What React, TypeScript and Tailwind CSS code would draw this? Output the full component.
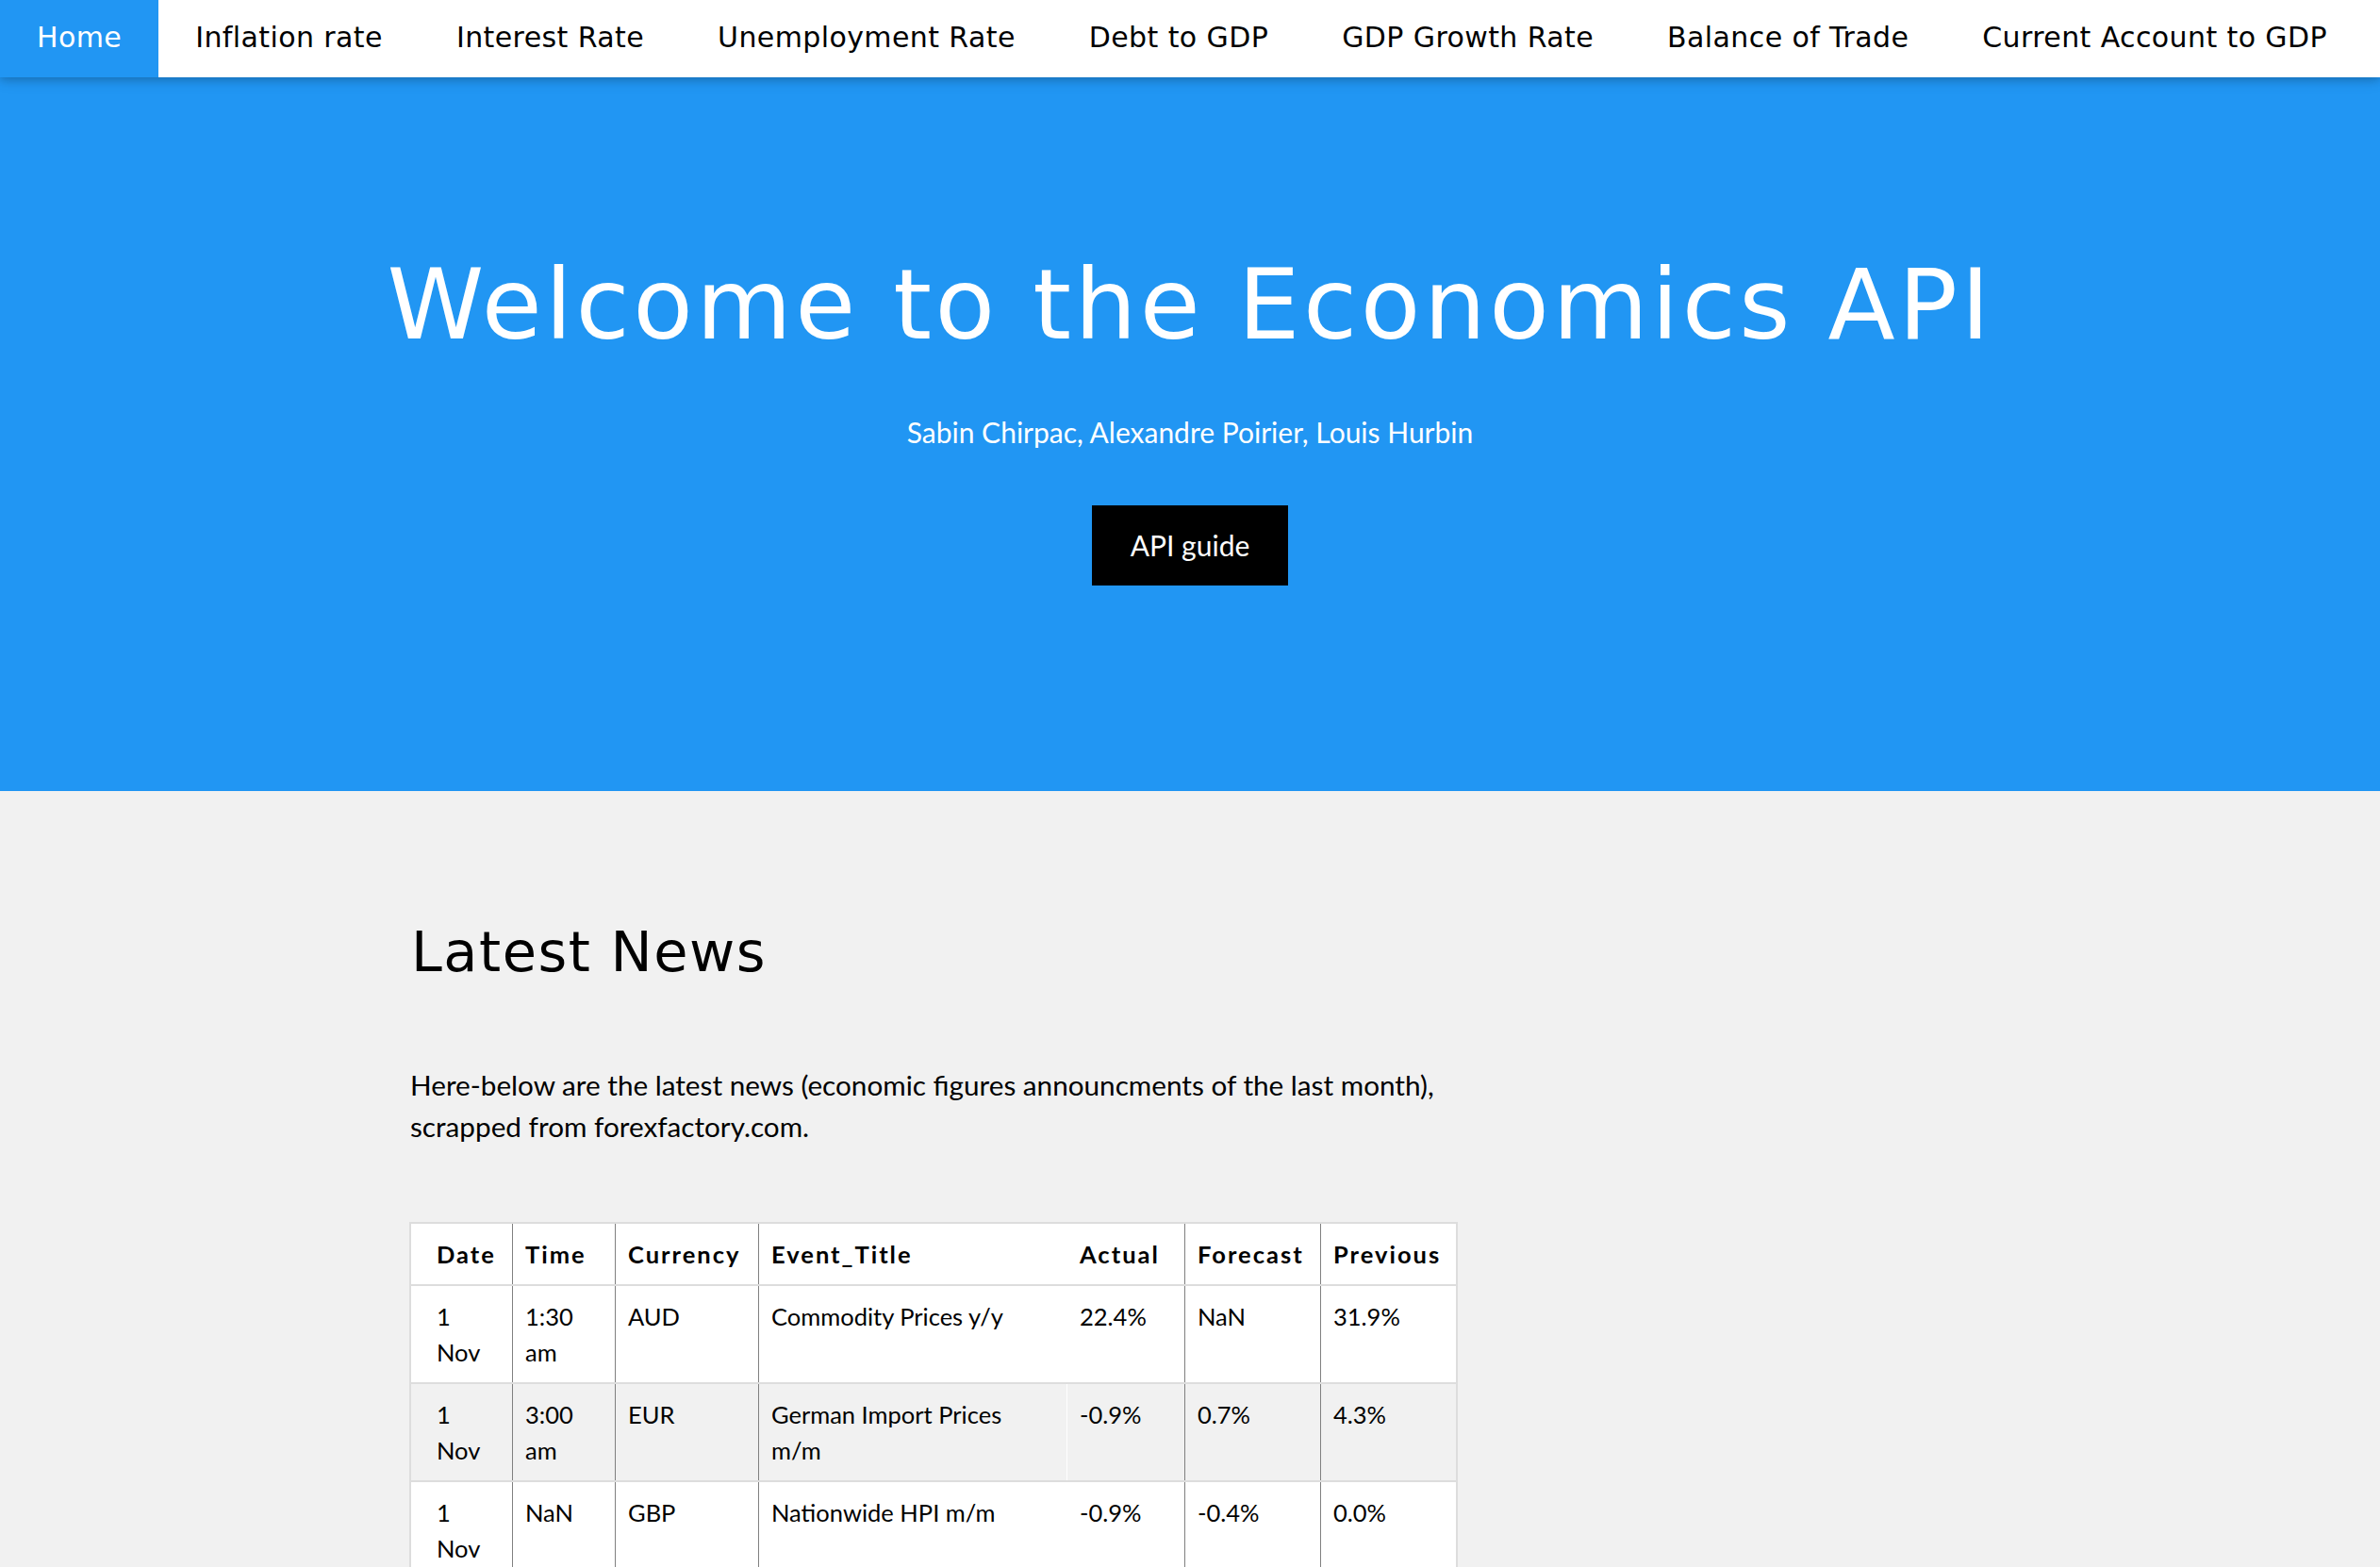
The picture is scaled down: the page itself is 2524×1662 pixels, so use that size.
import React from 'react';

const navLinks = [
  'Home',
  'Inflation rate',
  'Interest Rate',
  'Unemployment Rate',
  'Debt to GDP',
  'GDP Growth Rate',
  'Balance of Trade',
  'Current Account to GDP',
];

// column widths include the left border of each cell
const columns = [
  { name: 'Date', w: 'w-[107px]', border: 'border-l-0', pl: 'pl-[27px]' },
  { name: 'Time', w: 'w-[109px]', border: 'border-l border-[#808080]', pl: 'pl-[13px]' },
  { name: 'Currency', w: 'w-[152px]', border: 'border-l border-[#808080]', pl: 'pl-[13px]' },
  { name: 'Event_Title', w: 'w-[327px]', border: 'border-l border-[#808080]', pl: 'pl-[13px]' },
  { name: 'Actual', w: 'w-[125px]', border: 'border-l border-white', pl: 'pl-[13px]' },
  { name: 'Forecast', w: 'w-[144px]', border: 'border-l border-[#808080]', pl: 'pl-[13px]' },
  { name: 'Previous', w: 'w-[144px]', border: 'border-l border-[#808080]', pl: 'pl-[13px]' },
];

const news = [
  ['1\nNov', '1:30\nam', 'AUD', 'Commodity Prices y/y', '22.4%', 'NaN', '31.9%'],
  ['1\nNov', '3:00\nam', 'EUR', 'German Import Prices\nm/m', '-0.9%', '0.7%', '4.3%'],
  ['1\nNov', 'NaN', 'GBP', 'Nationwide HPI m/m', '-0.9%', '-0.4%', '0.0%'],
];

const headFont = { fontFamily: '"DejaVu Sans", "Open Sans", sans-serif' };

const App = () => {
  return (
    <div className="min-h-screen bg-[#f1f1f1] text-black font-['Lato',sans-serif]">
      {/* Top navigation bar */}
      <nav
        className="relative z-10 flex h-[82px] bg-white shadow-[0_3px_8px_0_rgba(0,0,0,0.16),0_3px_16px_0_rgba(0,0,0,0.12)]"
        style={headFont}
      >
        {navLinks.map((link, i) => (
          <a
            key={link}
            href="#"
            className={
              'flex items-center px-[39px] pb-[3px] text-[30px] tracking-[0.4px] whitespace-nowrap ' +
              (i === 0 ? 'bg-[#2196F3] text-white' : 'text-black')
            }
          >
            {link}
          </a>
        ))}
      </nav>

      {/* Header */}
      <header className="flex h-[757px] flex-col items-center bg-[#2196F3] text-white">
        <h1 className="mt-[189px] text-[104px] leading-none tracking-[3.5px]" style={headFont}>
          Welcome to the Economics API
        </h1>
        <p className="mt-[61px] text-[30px] leading-[44px]">Sabin Chirpac, Alexandre Poirier, Louis Hurbin</p>
        <button className="mt-[56px] bg-black px-[41px] py-[20px] text-[30px] leading-[45px] text-white">
          API guide
        </button>
      </header>

      {/* Latest news */}
      <section className="ml-[434px] w-[1112px] pt-[141px]">
        <h1 className="ml-[2px] text-[59px] leading-none tracking-[1.5px]" style={headFont}>
          Latest News
        </h1>
        <p className="ml-[1px] mt-[90px] w-[1110px] text-[29.7px] leading-[44px]">
          Here-below are the latest news (economic figures announcments of the last month), scrapped from forexfactory.com.
        </p>

        <div className="mt-[79px] border-2 border-[#dddddd] bg-white text-[25.5px] leading-[38px]">
          <div className="flex border-b-2 border-[#dddddd] bg-white">
            {columns.map((c) => (
              <div key={c.name} className={`${c.w} ${c.border} ${c.pl} py-[13px] pr-[8px] font-bold tracking-[2px]`}>
                {c.name}
              </div>
            ))}
          </div>
          {news.map((row, r) => (
            <div
              key={r}
              className={'flex border-b-2 border-[#dddddd] ' + (r % 2 === 1 ? 'bg-[#f1f1f1]' : 'bg-white')}
            >
              {row.map((cell, i) => (
                <div
                  key={i}
                  className={`${columns[i].w} ${columns[i].border} ${columns[i].pl} py-[13px] pr-[8px] whitespace-pre-line`}
                >
                  {cell}
                </div>
              ))}
            </div>
          ))}
        </div>
      </section>
    </div>
  );
};

export default App;
